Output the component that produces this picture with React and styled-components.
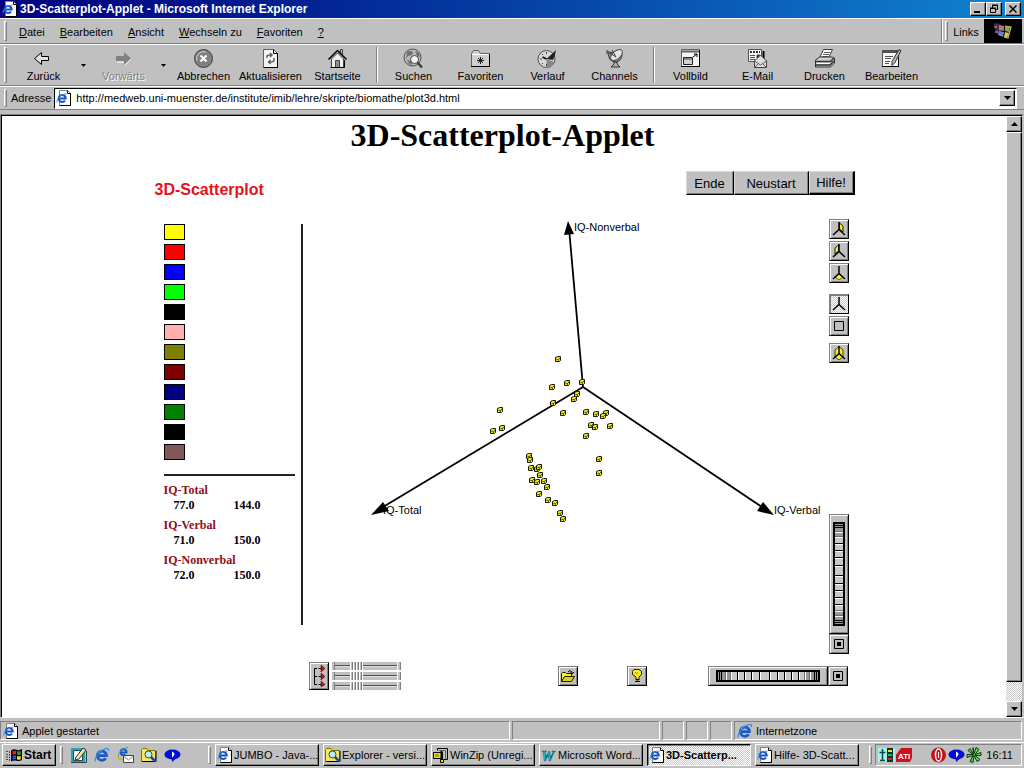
import { useState } from 'react';
import { styled, css, createGlobalStyle } from 'styled-components';

const GlobalStyle = createGlobalStyle`
  * {
    box-sizing: border-box;
  }

  body {
    margin: 0;
    background: #c0c0c0;
    color: #000;
    font-family: "Liberation Sans", Arial, sans-serif;
    font-size: 11px;
  }

  button, input {
    font: inherit;
    color: inherit;
    padding: 0;
    margin: 0;
    border: none;
    border-radius: 0;
    background: none;
  }

  svg {
    display: block;
    flex-shrink: 0;
  }
`;

const raised = css`
  background-color: #c0c0c0;
  border: 1px solid;
  border-color: #fff #000 #000 #fff;
  box-shadow: inset -1px -1px 0 #808080;
`;

const dither = css`
  background: repeating-conic-gradient(#fff 0 25%, #c8c8c8 0 50%) 0 0 / 2px 2px;
`;

const Screen = styled.div`
  display: flex;
  flex-direction: column;
  height: 100vh;
  overflow: hidden;
  background: #c0c0c0;
`;

/* ---------- title bar ---------- */

const TitleBar = styled.header`
  display: flex;
  align-items: center;
  gap: 2px;
  height: 18px;
  padding: 0 3px 0 2px;
  background: linear-gradient(90deg, #000080 0%, #00188c 22%, #1084d0 100%);
  color: #fff;
  font-size: 12px;
  font-weight: 700;
  white-space: nowrap;

  & span {
    flex: 1;
  }
`;

const WindowButton = styled.button`
  ${raised}
  display: flex;
  align-items: center;
  justify-content: center;
  width: 16px;
  height: 14px;
  margin-left: ${({ $apart }) => ($apart ? '1px' : '-2px')};
`;

/* ---------- menu, toolbar, address ---------- */

const Band = styled.div`
  display: flex;
  height: ${({ $height }) => $height}px;
  padding: 0 2px 0 4px;
  border-top: 1px solid #fff;
  border-bottom: 1px solid #808080;
  white-space: nowrap;
`;

const Grip = styled.span`
  flex: none;
  width: 3px;
  margin: 2px 0;
  border: 1px solid;
  border-color: #fff #808080 #808080 #fff;
`;

const Menu = styled.nav`
  display: flex;
  flex: 1;
  align-items: center;
  gap: 15px;
  padding: 1px 0 0 12px;
`;

const LinksBand = styled.div`
  display: flex;
  align-items: stretch;
  gap: 4px;
  padding-left: 3px;
  border-left: 1px solid #808080;
  box-shadow: inset 1px 0 0 #fff;

  & button {
    width: 28px;
    padding-top: 2px;
  }
`;

const Throbber = styled.div`
  display: flex;
  align-items: center;
  justify-content: center;
  width: 38px;
  background: #000;
`;

const Tools = styled.div`
  display: flex;
  flex: 1;
  padding-left: 3px;
`;

const ToolButton = styled.button`
  display: flex;
  flex-direction: column;
  align-items: center;
  width: 67px;
  padding-top: 3px;
  line-height: 14px;

  & svg {
    margin-bottom: 1px;
  }

  &:disabled {
    color: #808080;
    text-shadow: 1px 1px 0 #fff;
  }
`;

const DropButton = styled.button`
  display: flex;
  align-items: center;
  justify-content: center;
  width: 13px;
`;

const Separator = styled.span`
  width: 2px;
  margin: 2px 2px 2px 5px;
  border-left: 1px solid #808080;
  border-right: 1px solid #fff;
`;

const AddressForm = styled.form`
  display: flex;
  flex: 1;
  align-items: center;
  gap: 3px;
  padding: 0 5px 0 4px;
`;

const AddressField = styled.div`
  display: flex;
  flex: 1;
  align-items: center;
  height: 21px;
  padding: 1px;
  background: #fff;
  border: 1px solid;
  border-color: #000 #fff #fff #000;

  & input {
    flex: 1;
    min-width: 0;
    padding-left: 4px;
    outline: none;
  }
`;

const ArrowButton = styled.button`
  ${raised}
  display: flex;
  flex: none;
  align-items: center;
  justify-content: center;
  width: 16px;
  height: 16px;
`;

/* ---------- document ---------- */

const Viewport = styled.div`
  display: flex;
  flex: 1;
  min-height: 0;
  margin-top: 4px;
  padding-right: 1px;
  border: 1px solid;
  border-color: #808080 #c0c0c0 #fff #808080;
`;

const Page = styled.main`
  flex: 1;
  min-width: 0;
  overflow: hidden;
  padding: 1px 3px 0 0;
  background: #fff;
  border-top: 1px solid #000;
  border-left: 1px solid #000;
`;

const Heading = styled.h1`
  margin: 0 0 18px;
  font-family: "Liberation Serif", "Times New Roman", serif;
  font-size: 32px;
  line-height: 36px;
  text-align: center;
`;

const ScrollBar = styled.div`
  display: flex;
  flex-direction: column;
  width: 16px;
  border-top: 1px solid #000;
  ${dither}
`;

const ScrollThumb = styled.div`
  ${raised}
  flex: 1;
  margin-bottom: 19px;
`;

const Applet = styled.section`
  width: 100%;
  max-width: 704px;
  margin: 0 auto;
  padding-left: 4px;
`;

const AppletHeader = styled.div`
  display: flex;
  align-items: flex-start;
  justify-content: space-between;
`;

const AppletTitle = styled.h2`
  margin: 0;
  padding-top: 10px;
  color: #e8101c;
  font-size: 16px;
  line-height: 18px;
`;

const AwtButtons = styled.div`
  display: flex;
`;

const AwtButton = styled.button`
  width: ${({ $width }) => $width}px;
  height: 24px;
  background: #c0c0c0;
  border: 1px solid;
  border-color: #d8d8d8 #000 #000 #d8d8d8;
  border-right-width: ${({ $focused }) => ($focused ? '2px' : '1px')};
  border-bottom-width: ${({ $focused }) => ($focused ? '2px' : '1px')};
  box-shadow: inset -1px -1px 0 #808080;
  font-size: 13px;
`;

const AppletBody = styled.div`
  display: flex;
  height: 439px;
  margin-top: 16px;
`;

const Side = styled.aside`
  width: 148px;
  height: 401px;
  margin-top: 9px;
  padding: 0 6px 0 9px;
  border-right: 2px solid #222;
`;

const Swatches = styled.ul`
  display: grid;
  gap: 4px;
  margin: 0 0 14px;
  padding: 0;
  list-style: none;
`;

const Swatch = styled.li`
  width: 21px;
  height: 16px;
  border: 1px solid #000;
  background: ${({ $color }) => $color};
`;

const Ranges = styled.dl`
  margin: 0;
  padding-top: 7px;
  border-top: 2px solid #222;
  font-family: "Liberation Serif", "Times New Roman", serif;
  font-size: 12px;
  font-weight: 700;
  line-height: 15px;

  & dt {
    color: #900c18;
  }

  & dd {
    display: grid;
    grid-template-columns: 60px auto;
    margin: 0 0 5px;
    padding-left: 10px;
  }
`;

const Plot = styled.svg`
  flex: 1;
  min-width: 0;
  height: 100%;
  font-size: 11px;
`;

const Tiles = styled.div`
  display: flex;
  flex-direction: column;
  margin-right: 6px;
  padding-top: 4px;
`;

const TileGroup = styled.div`
  display: grid;
  gap: 2px;
  margin-bottom: ${({ $gap }) => $gap}px;
`;

const Tile = styled.button`
  ${raised}
  display: flex;
  align-items: center;
  justify-content: center;
  width: 20px;
  height: ${({ $tall }) => ($tall ? '28px' : '20px')};
  outline: 0;
  border-color: #808080 #000 #000 #808080;
  box-shadow: inset 1px 1px 0 #fff, inset -1px -1px 0 #808080;

  ${({ $pressed }) =>
    $pressed &&
    css`
      ${dither}
      border-color: #808080 #000 #000 #808080;
      box-shadow: inset 1px 1px 0 #808080;
    `}
`;

const WheelGroup = styled.div`
  display: flex;
  flex-direction: ${({ $vertical }) => ($vertical ? 'column' : 'row')};
  margin-top: ${({ $vertical }) => ($vertical ? 'auto' : '0')};
`;

const WheelFrame = styled.label`
  ${raised}
  position: relative;
  display: flex;
  align-items: center;
  justify-content: center;
  width: ${({ $vertical }) => ($vertical ? '20px' : '120px')};
  height: ${({ $vertical }) => ($vertical ? '120px' : '20px')};
  border-color: #808080 #000 #000 #808080;
  box-shadow: inset 1px 1px 0 #fff, inset -1px -1px 0 #808080;

  & input {
    position: absolute;
    inset: 0;
    width: 100%;
    height: 100%;
    opacity: 0;
  }
`;

const AppletFooter = styled.div`
  display: grid;
  grid-template-columns: 249px 69px 1fr auto;
  align-items: center;
  margin-top: 8px;
  padding: 0 7px 0 154px;
`;

const SliderPanel = styled.div`
  display: flex;
  gap: 2px;
`;

const Sliders = styled.div`
  display: grid;
  gap: 2px;
  width: 70px;
`;

const thumb = css`
  appearance: none;
  width: 13px;
  height: 8px;
  border: none;
  border-radius: 0;
  background: repeating-linear-gradient(90deg, #fff 0 1px, #c0c0c0 1px 2px, #808080 2px 3px);
`;

const Slider = styled.input`
  appearance: none;
  width: 100%;
  height: 8px;
  background:
    linear-gradient(90deg, #fff 0 1px, #c0c0c0 1px 3px, #808080 3px 4px, transparent 4px calc(100% - 4px), #fff calc(100% - 4px) calc(100% - 3px), #c0c0c0 calc(100% - 3px) calc(100% - 1px), #808080 calc(100% - 1px)),
    linear-gradient(#c0c0c0 0 3px, #505050 3px 4px, #e0e0e0 4px 5px, #c0c0c0 5px);

  &::-webkit-slider-thumb {
    ${thumb}
  }

  &::-moz-range-thumb {
    ${thumb}
  }
`;

/* ---------- status bar and task bar ---------- */

const StatusBar = styled.footer`
  display: grid;
  grid-template-columns: 1fr 148px 22px 22px 22px 288px;
  gap: 2px;
  height: 24px;
  padding: 3px 2px 2px 0;
`;

const StatusPane = styled.div`
  display: flex;
  align-items: center;
  gap: 3px;
  padding-left: 2px;
  border: 1px solid;
  border-color: #808080 #fff #fff #808080;
`;

const TaskBar = styled.footer`
  display: flex;
  height: 26px;
  padding: 1px 2px 2px;
  border-top: 1px solid #fff;
  white-space: nowrap;
`;

const StartButton = styled.button`
  ${raised}
  display: flex;
  align-items: center;
  gap: 2px;
  width: 54px;
  padding-left: 3px;
  font-size: 12px;
  font-weight: 700;
`;

const QuickLaunch = styled.div`
  display: flex;
  align-items: center;
  gap: 7px;
  width: 148px;
  margin-left: 4px;

  & > span {
    align-self: stretch;
    margin-right: 1px;
  }
`;

const TaskList = styled.div`
  display: flex;
  flex: 1;
  gap: 4px;
  min-width: 0;
  margin-left: 4px;
`;

const Task = styled.button`
  ${raised}
  display: flex;
  flex: 0 1 104px;
  align-items: center;
  gap: 1px;
  min-width: 0;
  padding-left: 1px;
  white-space: nowrap;

  ${({ $active }) =>
    $active &&
    css`
      ${dither}
      border-color: #000 #fff #fff #000;
      box-shadow: inset 1px 1px 0 #808080;
      font-weight: 700;
    `}
`;

const Tray = styled.div`
  display: flex;
  align-items: center;
  gap: 1px;
  width: 147px;
  margin-left: 3px;
  padding: 0 8px 0 2px;
  border: 1px solid;
  border-color: #808080 #fff #fff #808080;

  & time {
    margin-left: auto;
  }
`;

const TrayGap = styled.span`
  width: 15px;
`;

/* ---------- icons ---------- */

function Explorer({ size = 16 }) {
  return (
    <svg width={size} height={size} viewBox="0 0 16 16" fill="none">
      <path d="M3.5 8.7H12.5A4.6 4.6 0 1 0 11.7 11.3" stroke="#1c58c8" strokeWidth="2.8" />
      <path d="M4 6A4.8 4.8 0 0 1 8 3.5" stroke="#62b4f4" />
      <path d="M1.5 14.5C-.5 12 5 4 11 1.8c3-1 4 0 3.3 2.2" stroke="#3888dc" strokeWidth="1.2" />
    </svg>
  );
}

function PageIcon() {
  return (
    <svg width="16" height="16" viewBox="0 0 16 16" fill="none">
      <path d="M3.5.5h8l3 3v12h-11z" fill="#fff" stroke="#808080" />
      <path d="M11.5.5v3h3v12h-11" stroke="#000" />
      <path d="M2.7 8.5h7A3.5 3.5 0 1 0 9 10.6" stroke="#1850c0" strokeWidth="2" />
      <path d="M1 12.5C0 10 5 4 10.5 4" stroke="#3890e0" />
    </svg>
  );
}

function Flag() {
  return (
    <svg width="16" height="16" viewBox="0 0 16 16">
      <path d="M5 3.5q3-2 5.5-.8T16 2v11q-3 1.6-5.5.7T5 14.500z" fill="#000" />
      <path d="M6.500 4.200q2-1 3.500-.5v3.800q-2-.5-3.500.5z" fill="#e02020" />
      <path d="M11 4q2 .6 3.700 0v3.800q-2 .5-3.700 0z" fill="#20a020" />
      <path d="M6.500 9q2-1 3.500-.5v3.800q-2-.5-3.500.5z" fill="#2050e0" />
      <path d="M11 9q2 .6 3.700 0v3.500q-2 .5-3.700 0z" fill="#f0e020" />
      <path d="M0 4h2v1H0zM3 4h1v2H3zM0 7h2v1H0zM3 7h1v2H3zM0 12h2v1H0zM3 12h1v2H3z" fill="#c02020" />
      <path d="M0 9.500h2v1H0zM3 10h1v1H3z" fill="#1030a0" />
    </svg>
  );
}

function FlyingFlag() {
  return (
    <svg width="20" height="18" viewBox="0 0 20 18">
      <path d="M1 2q3-2 7 1v10q-3-1-5-2z" fill="#604870" opacity=".7" />
      <path d="M1 4h3v2H1zM2 9h3v2H2z" fill="#a07080" opacity=".8" />
      <path d="m6 3 5 1v5L6 8z" fill="#b87070" />
      <path d="m12 4 5 1-1 5-4-1z" fill="#78a868" />
      <path d="m6 9 5 1-1 5-5-2z" fill="#6088c8" />
      <path d="m12 10 4 1-2 5-3-1z" fill="#e0c850" />
      <path d="m12 4 6 1-3 11-4-1" fill="none" stroke="#d8b850" strokeWidth="1.2" />
    </svg>
  );
}

function FolderSearch() {
  return (
    <svg width="16" height="16" viewBox="0 0 16 16">
      <path d="M.5 14.500V2.500l1-1h4l1.500 2h7.500v11z" fill="#f8e860" stroke="#807000" />
      <path d="M1 14.500h14V4" fill="none" stroke="#000" />
      <circle cx="7.500" cy="7.500" r="3.500" fill="#b8f0f8" stroke="#404040" />
      <path d="m10 10 4.500 4.500" stroke="#1848c0" strokeWidth="2.500" />
    </svg>
  );
}

function ZipIcon() {
  return (
    <svg width="16" height="16" viewBox="0 0 16 16">
      <path d="M4.500 3.500v-2h10v11h-4" fill="#c0c0c0" stroke="#000" />
      <path d="M6 3.500h6.500v9" fill="none" stroke="#606060" />
      <path d="M.5 5.500h9v6h-9z" fill="#f0e020" stroke="#000" />
      <path d="M2 7h4v3H2z" fill="#b0a010" />
      <path d="M8.500 4v10" stroke="#000" strokeWidth="2" />
      <path d="M7.500 12.500h3v3h-3z" fill="#f0e020" stroke="#000" />
    </svg>
  );
}

function WordIcon() {
  return (
    <svg width="16" height="16" viewBox="0 0 16 16">
      <text x="0" y="14" fontSize="15" fontWeight="700" fontStyle="italic" fontFamily="Liberation Serif, serif" fill="#18d0d8" stroke="#005868" strokeWidth=".6">W</text>
    </svg>
  );
}

function DesktopIcon() {
  return (
    <svg width="16" height="16" viewBox="0 0 16 16">
      <path d="M0 1h14v14H0z" fill="#20a8c0" />
      <path d="M2.500 3.500h9v10h-9z" fill="#fff" stroke="#205060" />
      <path d="M5 10 12 1l3 2-7 9-4 1z" fill="#f0e8a0" stroke="#303030" />
      <path d="M0 15.500h15.500V4" fill="none" stroke="#304040" />
    </svg>
  );
}

function MailIcon() {
  return (
    <svg width="17" height="16" viewBox="0 0 17 16" fill="none">
      <path d="M3.500 5.500h6A3 3 0 1 0 8.500 7.500" stroke="#1858b8" strokeWidth="2" />
      <path d="M1.500 9C0 7 6 1 11 .5" stroke="#3890e0" />
      <path d="M1.500 9v3h5" stroke="#c8a020" />
      <path d="M6.500 8.500h10v7h-10z" fill="#fff" stroke="#404040" />
      <path d="m6.500 9 5 4 5-4" stroke="#808080" />
    </svg>
  );
}

function BubbleIcon() {
  return (
    <svg width="17" height="16" viewBox="0 0 17 16">
      <ellipse cx="8.500" cy="7.500" rx="8" ry="5" fill="#0010d8" />
      <path d="m7 11 1.500 4L12 11z" fill="#0010d8" />
      <path d="M8 4.500q5 2.500 0 6z" fill="#fff" />
    </svg>
  );
}

function OperaIcon() {
  return (
    <svg width="17" height="16" viewBox="0 0 17 16">
      <circle cx="8.500" cy="8" r="7.500" fill="#c81018" />
      <ellipse cx="8.500" cy="8" rx="3" ry="6" fill="#c81018" stroke="#fff" strokeWidth="1.500" />
      <path d="M8 5h1v6H8z" fill="#fff" />
    </svg>
  );
}

function FlowerIcon() {
  return (
    <svg width="16" height="16" viewBox="0 0 16 16" fill="#50e050" stroke="#083808">
      <path d="M7.500 7.500 4 1.500l-2 2 5 4-6 0v3l6-2-3 6 3 1 1-7 3 6 3-2-5-4 6 0v-3l-6 2 4-5-3-2-2 6-1-6z" />
    </svg>
  );
}

function MonitorIcon() {
  return (
    <svg width="17" height="16" viewBox="0 0 17 16">
      <path d="M0 1h17v14H0z" fill="#a8f0f0" />
      <path d="M9 1h6v14H9z" fill="#103030" />
      <path d="M10 3h4v2h-4z" fill="#f0e020" />
      <path d="M10 7h4v2h-4z" fill="#20c020" />
      <path d="M10 11h4v2h-4z" fill="#e02020" />
      <path d="M1.500 5.500h6M4.500 2v12M2 13.500h5" stroke="#084848" strokeWidth="1.500" />
    </svg>
  );
}

function AtiIcon() {
  return (
    <svg width="17" height="16" viewBox="0 0 17 16">
      <path d="M5 1h11v10l-2 4H0V8z" fill="#d01018" />
      <text x="2" y="12" fontSize="8" fontWeight="700" fill="#fff">ATI</text>
    </svg>
  );
}

const toolIcons = {
  back: (
    <path d="M1.500 10.500 8.500 4.500v4h7v4h-7v4z" fill="#e0e0e0" stroke="#000" />
  ),
  forward: (
    <>
      <path d="M18 11 12 17v-3H4" fill="none" stroke="#fff" />
      <path d="M18 10.500 11 4v4H3v5h8v4z" fill="#808080" />
    </>
  ),
  stop: (
    <>
      <circle cx="10.500" cy="10.500" r="9" fill="#808080" stroke="#404040" />
      <path d="M4 13a7 7 0 0 1 9-9" fill="none" stroke="#d0d0d0" />
      <path d="m7.500 7.500 6 6m0-6-6 6" stroke="#fff" strokeWidth="2" />
    </>
  ),
  refresh: (
    <>
      <path d="M3.500 1.500h10l4 4v14h-14z" fill="#f4f4f4" stroke="#606060" />
      <path d="M13.500 1.500v4h4v14h-14" fill="none" stroke="#000" />
      <path d="M7 10V8q0-1 3-1h2m-2-2 2 2-2 2M14 10v2q0 2-3 2H8.500m2-2-2 2 2 2" fill="none" stroke="#606060" strokeWidth="1.500" />
    </>
  ),
  home: (
    <>
      <path d="M4.500 11v8.500h12V11l-6-6z" fill="#f0f0f0" stroke="#404040" />
      <path d="M13.500 6V1.500h2V8" fill="#c0c0c0" stroke="#404040" />
      <path d="m1.500 11.500 9-9 9 9" fill="none" stroke="#000" strokeWidth="1.500" />
      <path d="M8.500 19.500v-7h4v7z" fill="#909090" stroke="#404040" />
      <path d="M17.500 12v7.500h-14" fill="none" stroke="#000" />
    </>
  ),
  search: (
    <>
      <circle cx="9.500" cy="9.500" r="8.500" fill="#b8b8b8" stroke="#505050" />
      <path d="M4 4q3-2 6 0l-1 3-4 1-2 3zM12 3l4 2 1 4-3-1zM4 12l4 1 1 4-3-1z" fill="#707070" />
      <circle cx="11.500" cy="11.500" r="4" fill="#f4f4f4" stroke="#404040" />
      <path d="m14.500 14.500 4.500 5" stroke="#404040" strokeWidth="2.500" />
    </>
  ),
  favorites: (
    <>
      <path d="M1.500 18.500V5.500l2-3h5l2 3h9v13z" fill="#d0d0d0" stroke="#606060" />
      <path d="M2.500 6.500h16" stroke="#fff" />
      <path d="M1 18.500h18.500V6" fill="none" stroke="#000" />
      <path d="M10.500 9v7m-3.500-3.500h7m-6-2.500 5 5m0-5-5 5" stroke="#202020" />
    </>
  ),
  history: (
    <>
      <circle cx="9.500" cy="11" r="8.500" fill="#d8d8d8" stroke="#505050" />
      <path d="M9.500 11 17 4l2-2-1 5-2 5z" fill="#202020" />
      <path d="m9.500 11 8 3q-2 5-8 5z" fill="#888" />
      <path d="M9.500 4v2M3 11h2M9.500 16v2M5 6l1 1M5 16l1-1" stroke="#404040" />
      <path d="m9.500 11-4-2" stroke="#000" strokeWidth="1.500" />
    </>
  ),
  channels: (
    <>
      <path d="M4 4q0 10 8 10 6-1 6-8z" fill="#888" stroke="#404040" />
      <ellipse cx="12.500" cy="7" rx="7" ry="4" transform="rotate(-40 12.500 7)" fill="#e4e4e4" stroke="#505050" />
      <path d="m3 3 9 6M3 2v4M8 2l4 7" stroke="#404040" />
      <path d="M10 14h3v2l3 3H7l3-3z" fill="#b0b0b0" stroke="#303030" />
    </>
  ),
  fullscreen: (
    <>
      <path d="M1.500 1.500h18v17h-18z" fill="#f4f4f4" stroke="#606060" />
      <path d="M2 3.500h17" stroke="#606060" strokeWidth="2" />
      <path d="M19.500 2v16.500H1" fill="none" stroke="#000" />
      <path d="M3.500 9.500h9v7h-9z" fill="#d0d0d0" stroke="#202020" />
      <path d="M4 11h8" stroke="#404040" />
      <path d="m13 9 4-3m-3 0h3v3" fill="none" stroke="#000" />
    </>
  ),
  mail: (
    <>
      <path d="M1.500 1.500h13v12h-13z" fill="#f4f4f4" stroke="#505050" />
      <path d="M3 4h10" stroke="#303030" strokeWidth="2" strokeDasharray="2 1" />
      <path d="M3 7.500h5M3 9.500h5M3 11.500h5M10 7h3v3h-3z" stroke="#505050" />
      <path d="M16.500 3v8" stroke="#000" strokeWidth="2" />
      <path d="m7.500 13 6-6 6 6v6.500h-12z" fill="#ddd" stroke="#404040" />
      <path d="m7.500 13 6 4 6-4m-12 6.500 4-4m8 4-4-4" fill="none" stroke="#606060" />
    </>
  ),
  print: (
    <>
      <path d="m5.500 10 4-8.500h9l-4 8.500z" fill="#fff" stroke="#404040" />
      <path d="M10 4.500h6M9 6.500h6M8 8.500h6" stroke="#606060" />
      <path d="m1.500 12 4-3h13l2 2v4l-4 4h-15z" fill="#d0d0d0" stroke="#303030" />
      <path d="M1.500 13.500h15l4-4M2 17h14l4-4" fill="none" stroke="#303030" strokeWidth="1.500" />
      <path d="M3 15.500h13" stroke="#fff" />
    </>
  ),
  edit: (
    <>
      <path d="M1.500 2.500h16v16h-16z" fill="#f8f8f8" stroke="#505050" />
      <path d="M2 4h15" stroke="#505050" strokeWidth="2" />
      <path d="M4 8.500h8M4 10.500h6M4 13.500h5M4 15.500h4" stroke="#505050" />
      <path d="m18 1.500 2 1-6 12-3 3 0-4z" fill="#b8b8b8" stroke="#303030" />
      <path d="M1 18.500h16.500V10" fill="none" stroke="#000" />
    </>
  ),
};

function Arrow({ up }) {
  return (
    <svg width="7" height="4" viewBox="0 0 7 4">
      <path d={up ? 'M0 4h7L3.500 0z' : 'M0 0h7L3.500 4z'} />
    </svg>
  );
}

const glyphs = {
  right: <path d="M7.500 1 11 4v6L7.500 7z" fill="#f8f020" stroke="#202000" />,
  left: <path d="M6.500 1 3 4v6l3.500-3z" fill="#f8f020" stroke="#202000" />,
  floor: <path d="m7 8 4 3-4 3-4-3z" fill="#f8f020" stroke="#606000" />,
  all: (
    <path d="M7 .5 11 4v7l-4 3-4-3V4z" fill="#f8f020" stroke="#404000" />
  ),
};

function AxesGlyph({ name }) {
  if (name === 'box') {
    return (
      <svg width="14" height="14" viewBox="0 0 14 14">
        <path d="M2.500 2.500h9v9h-9z" fill="#c0c0c0" stroke="#000" />
      </svg>
    );
  }

  return (
    <svg width="14" height="14" viewBox="0 0 14 14">
      {glyphs[name]}
      <path d="M7 0v8m-6 5 6-5.500L13 13" fill="none" stroke="#000" strokeWidth="1.500" />
    </svg>
  );
}

function TargetGlyph() {
  return (
    <svg width="10" height="10" viewBox="0 0 10 10">
      <path d="M.5.5h9v9h-9z" fill="none" stroke="#000" />
      <path d="M3 3h4v4H3z" />
    </svg>
  );
}

const ticks = [9, 14, 21, 28, 35, 43, 54, 62, 69, 76, 83, 89, 94];

function WheelFace({ vertical }) {
  return (
    <svg
      width={vertical ? 12 : 104}
      height={vertical ? 104 : 12}
      viewBox={vertical ? '0 0 12 105' : '0 0 105 12'}
      shapeRendering="crispEdges"
    >
      <g transform={vertical ? 'matrix(0 1 1 0 0 0)' : undefined}>
        <rect width="105" height="12" />
        <rect x="2" y="2" width="101" height="8" fill="#989898" />
        <rect x="14" y="2" width="77" height="8" fill="#c8c8c8" />
        {ticks.map((x) => (
          <g key={x}>
            <rect x={x} y="2" width="1" height="8" fill={x < 15 || x > 85 ? '#707070' : '#000'} />
            <rect x={x + 1} y="2" width="1" height="8" fill="#fff" />
          </g>
        ))}
        <path d="M3 2h1v8H3zM5 2h1v8H5zM99 2h1v8h-1zM101 2h1v8h-1z" />
      </g>
    </svg>
  );
}

/* ---------- data ---------- */

const menus = [
  ['D', 'atei'],
  ['B', 'earbeiten'],
  ['A', 'nsicht'],
  ['W', 'echseln zu'],
  ['F', 'avoriten'],
  ['?', ''],
];

const tools = [
  { icon: 'back', label: 'Zurück', drop: true },
  { icon: 'forward', label: 'Vorwärts', drop: true, disabled: true },
  { icon: 'stop', label: 'Abbrechen' },
  { icon: 'refresh', label: 'Aktualisieren' },
  { icon: 'home', label: 'Startseite', last: true },
  { icon: 'search', label: 'Suchen' },
  { icon: 'favorites', label: 'Favoriten' },
  { icon: 'history', label: 'Verlauf' },
  { icon: 'channels', label: 'Channels', last: true },
  { icon: 'fullscreen', label: 'Vollbild' },
  { icon: 'mail', label: 'E-Mail' },
  { icon: 'print', label: 'Drucken' },
  { icon: 'edit', label: 'Bearbeiten' },
];

const swatches = [
  '#ffff00', '#ff0000', '#0000ff', '#00ff00', '#000000', '#ffafaf',
  '#808000', '#800000', '#000080', '#008000', '#000000', '#805858',
];

const ranges = [
  { name: 'IQ-Total', min: '77.0', max: '144.0' },
  { name: 'IQ-Verbal', min: '71.0', max: '150.0' },
  { name: 'IQ-Nonverbal', min: '72.0', max: '150.0' },
];

const points = [
  [558, 359], [567, 383], [582, 382], [552, 387], [577, 394], [574, 399],
  [553, 403], [563, 413], [500, 410], [502, 428], [493, 431], [586, 412],
  [596, 414], [606, 413], [603, 416], [591, 425], [595, 427], [610, 426],
  [586, 436], [599, 459], [599, 473], [529, 456], [530, 460], [531, 468],
  [537, 469], [539, 467], [540, 475], [532, 480], [537, 482], [544, 481],
  [547, 487], [539, 494], [548, 500], [555, 503], [560, 513], [563, 519],
];

const tasks = [
  { icon: <PageIcon />, label: 'JUMBO - Java-...' },
  { icon: <FolderSearch />, label: 'Explorer - versi...' },
  { icon: <ZipIcon />, label: 'WinZip (Unregi...' },
  { icon: <WordIcon />, label: 'Microsoft Word...' },
  { icon: <PageIcon />, label: '3D-Scatterp...' },
  { icon: <PageIcon />, label: 'Hilfe- 3D-Scatt...' },
];

/* ---------- parts ---------- */

function ScatterPlot() {
  return (
    <Plot viewBox="303 215 526 439" role="img" aria-label="IQ-Total, IQ-Verbal, IQ-Nonverbal">
      <g stroke="#000" strokeWidth="1.800">
        <path d="M583 387 569 228M583 387 378 510M583 387l185 124" />
      </g>
      <path d="m568 221 6 13-10 1zM371 515l12-13 6 9zM774 515l-17-4 6-9z" />
      <text x="574" y="231">IQ-Nonverbal</text>
      <text x="383" y="514">IQ-Total</text>
      <text x="774" y="514">IQ-Verbal</text>
      {points.map(([x, y]) => (
        <g key={`${x}-${y}`} transform={`translate(${x} ${y})`}>
          <path d="M-2.500-1.500-.5-2.500h3v4l-1 1h-4z" fill="#e8e020" stroke="#181800" />
          <path d="M-1.500.5h2v2M.5.5l2-2" fill="none" stroke="#404000" strokeWidth=".8" />
        </g>
      ))}
    </Plot>
  );
}

function Wheel({ label, vertical }) {
  return (
    <WheelGroup $vertical={vertical}>
      <WheelFrame $vertical={vertical}>
        <WheelFace vertical={vertical} />
        <input type="range" aria-label={label} />
      </WheelFrame>
      <Tile type="button" aria-label="Zentrieren"><TargetGlyph /></Tile>
    </WheelGroup>
  );
}

function ScatterApplet() {
  const [view, setView] = useState('axes');

  function renderTile(name) {
    return (
      <Tile
        key={name}
        type="button"
        aria-label={name}
        $pressed={view === name}
        onClick={() => setView(name)}
      >
        <AxesGlyph name={name} />
      </Tile>
    );
  }

  return (
    <Applet>
      <AppletHeader>
        <AppletTitle>3D-Scatterplot</AppletTitle>
        <AwtButtons>
          <AwtButton type="button" $width={48}>Ende</AwtButton>
          <AwtButton type="button" $width={75}>Neustart</AwtButton>
          <AwtButton type="button" $width={46} $focused>Hilfe!</AwtButton>
        </AwtButtons>
      </AppletHeader>

      <AppletBody>
        <Side>
          <Swatches>
            {swatches.map((color, index) => (
              <Swatch key={index} $color={color} />
            ))}
          </Swatches>
          <Ranges>
            {ranges.map(({ name, min, max }) => (
              <div key={name}>
                <dt>{name}</dt>
                <dd>
                  <span>{min}</span>
                  <span>{max}</span>
                </dd>
              </div>
            ))}
          </Ranges>
        </Side>
        <ScatterPlot />
        <Tiles>
          <TileGroup $gap={11}>{['right', 'left', 'floor'].map(renderTile)}</TileGroup>
          <TileGroup $gap={7}>{['axes', 'box'].map(renderTile)}</TileGroup>
          <TileGroup $gap={0}>{['all'].map(renderTile)}</TileGroup>
          <Wheel label="Drehen vertikal" vertical />
        </Tiles>
      </AppletBody>

      <AppletFooter>
        <SliderPanel>
          <Tile type="button" $tall aria-label="Achsen">
            <svg width="14" height="22" viewBox="0 0 14 22">
              <path d="M5 3.500H2.500v16H5M2.500 11.500H5M6.500 3.500h3M6.500 11.500h3M6.500 19.500h3" fill="none" stroke="#000" />
              <path d="m9 0 4 3.500L9 7zM9 8l4 3.500L9 15zM9 16l4 3.500L9 22z" fill="#c01020" stroke="#300" strokeWidth=".5" />
            </svg>
          </Tile>
          <Sliders>
            {ranges.map(({ name }) => (
              <Slider key={name} type="range" defaultValue="35" aria-label={name} />
            ))}
          </Sliders>
        </SliderPanel>
        <Tile type="button" aria-label="Öffnen">
          <svg width="14" height="14" viewBox="0 0 14 14">
            <path d="M.5 12.500v-8l1-1h3l1 1h5v3" fill="#f8f020" stroke="#202000" />
            <path d="m.5 12.500 3-5h10l-3 5z" fill="#d8d010" stroke="#202000" />
            <path d="M7 3q2-3 4 0v1.500m-1.500-1 1.500 1.500 2-2" fill="none" stroke="#000" />
          </svg>
        </Tile>
        <Tile type="button" aria-label="Tipp">
          <svg width="12" height="14" viewBox="0 0 12 14">
            <path d="M3 .5h5l2.500 2v3L8 8v3H5V8L1.500 5.500v-3z" fill="#f8f020" stroke="#202000" />
            <path d="m4 3 1.500 2L7 3" fill="none" stroke="#a09000" />
            <path d="M5 10h3v1H5zM4 12h5v1H4z" />
          </svg>
        </Tile>
        <Wheel label="Drehen horizontal" />
      </AppletFooter>
    </Applet>
  );
}

export default function App() {
  const [address, setAddress] = useState(
    'http://medweb.uni-muenster.de/institute/imib/lehre/skripte/biomathe/plot3d.html'
  );
  const [activeTask, setActiveTask] = useState(4);

  return (
    <Screen>
      <GlobalStyle />

      <TitleBar>
        <PageIcon />
        <span>3D-Scatterplot-Applet - Microsoft Internet Explorer</span>
        <WindowButton type="button" aria-label="Minimieren">
          <svg width="10" height="8" viewBox="0 0 10 8"><path d="M1 6h6v2H1z" /></svg>
        </WindowButton>
        <WindowButton type="button" aria-label="Wiederherstellen">
          <svg width="10" height="10" viewBox="0 0 10 10" fill="none" stroke="#000">
            <path d="M3.500 4V1.500h5v4H7M3 1h6M1.500 4.500h5v4h-5zM1 4h6" />
          </svg>
        </WindowButton>
        <WindowButton type="button" $apart aria-label="Schließen">
          <svg width="8" height="8" viewBox="0 0 8 8"><path d="m.5.5 7 7m0-7-7 7" stroke="#000" strokeWidth="1.500" /></svg>
        </WindowButton>
      </TitleBar>

      <Band $height={26}>
        <Grip />
        <Menu>
          {menus.map(([key, rest]) => (
            <button key={key} type="button"><u>{key}</u>{rest}</button>
          ))}
        </Menu>
        <LinksBand>
          <Grip />
          <button type="button">Links</button>
          <Throbber><FlyingFlag /></Throbber>
        </LinksBand>
      </Band>

      <Band $height={42}>
        <Grip />
        <Tools>
          {tools.map(({ icon, label, drop, disabled, last }) => [
            <ToolButton key={icon} type="button" disabled={disabled}>
              <svg width="21" height="20" viewBox="0 0 21 20">{toolIcons[icon]}</svg>
              {label}
            </ToolButton>,
            drop && (
              <DropButton key={`${icon}-drop`} type="button" aria-label={`${label} Liste`}>
                <svg width="5" height="3" viewBox="0 0 5 3"><path d="M0 0h5L2.500 3z" /></svg>
              </DropButton>
            ),
            last && <Separator key={`${icon}-end`} />,
          ])}
        </Tools>
      </Band>

      <Band $height={24}>
        <Grip />
        <AddressForm onSubmit={(event) => event.preventDefault()}>
          <label htmlFor="address">Adresse</label>
          <AddressField>
            <PageIcon />
            <input
              id="address"
              type="text"
              value={address}
              onChange={(event) => setAddress(event.target.value)}
            />
            <ArrowButton type="button" aria-label="Adressliste"><Arrow /></ArrowButton>
          </AddressField>
        </AddressForm>
      </Band>

      <Viewport>
        <Page>
          <Heading>3D-Scatterplot-Applet</Heading>
          <ScatterApplet />
        </Page>
        <ScrollBar>
          <ArrowButton type="button" aria-label="Nach oben"><Arrow up /></ArrowButton>
          <ScrollThumb />
          <ArrowButton type="button" aria-label="Nach unten"><Arrow /></ArrowButton>
        </ScrollBar>
      </Viewport>

      <StatusBar>
        <StatusPane><PageIcon />Applet gestartet</StatusPane>
        <StatusPane />
        <StatusPane />
        <StatusPane />
        <StatusPane />
        <StatusPane><Explorer />Internetzone</StatusPane>
      </StatusBar>

      <TaskBar>
        <StartButton type="button"><Flag />Start</StartButton>
        <QuickLaunch>
          <Grip />
          <DesktopIcon />
          <Explorer />
          <MailIcon />
          <FolderSearch />
          <BubbleIcon />
        </QuickLaunch>
        <Grip />
        <TaskList>
          {tasks.map(({ icon, label }, index) => (
            <Task
              key={label}
              type="button"
              $active={index === activeTask}
              onClick={() => setActiveTask(index)}
            >
              {icon}
              {label}
            </Task>
          ))}
        </TaskList>
        <Grip />
        <Tray>
          <MonitorIcon />
          <AtiIcon />
          <TrayGap />
          <OperaIcon />
          <BubbleIcon />
          <FlowerIcon />
          <time>16:11</time>
        </Tray>
      </TaskBar>
    </Screen>
  );
}
